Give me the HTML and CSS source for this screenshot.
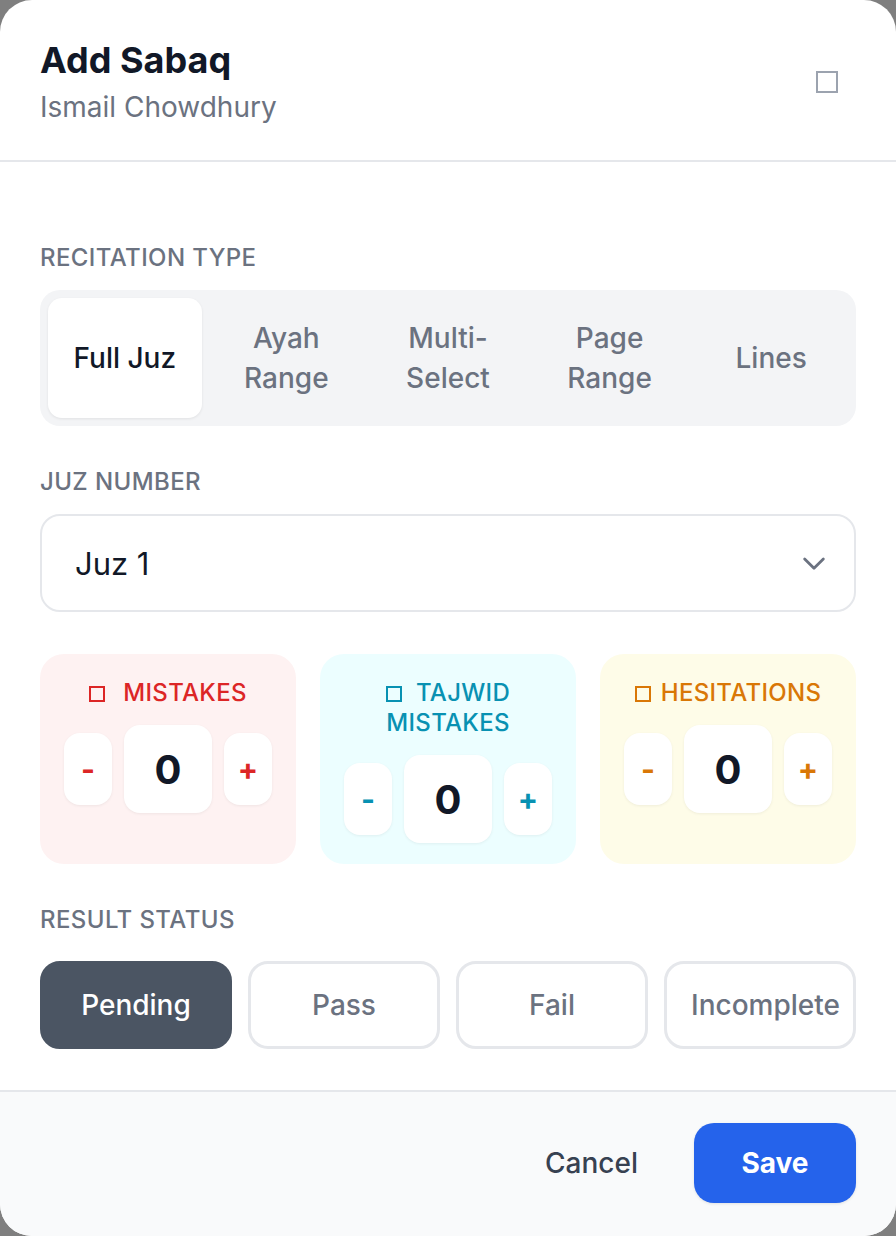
FILE: index.html
```html
<!DOCTYPE html>
<html lang="en">
<head>
    <meta charset="UTF-8">
    <meta name="viewport" content="width=device-width, initial-scale=1.0">
    <title>Add Sabaq</title>
    <link rel="stylesheet" href="styles.css">
</head>
<body>
    <div class="modal">
        <div class="modal-header">
            <div>
                <h2 class="title">Add Sabaq</h2>
                <p class="subtitle">Ismail Chowdhury</p>
            </div>
            <button class="close-btn" aria-label="Close"><span class="box-icon"></span></button>
        </div>

        <div class="modal-body">
            <label class="field-label">Recitation Type</label>
            <div class="tabs">
                <button class="tab active">Full Juz</button>
                <button class="tab">Ayah Range</button>
                <button class="tab">Multi-<br>Select</button>
                <button class="tab">Page Range</button>
                <button class="tab">Lines</button>
            </div>

            <label class="field-label">Juz Number</label>
            <div class="select">
                <span>Juz 1</span>
                <svg width="28" height="28" viewBox="0 0 24 24" fill="none" stroke="#6b7280" stroke-width="2.4" stroke-linecap="round" stroke-linejoin="round"><path d="M4 8.5l8 8 8-8"/></svg>
            </div>

            <div class="counters">
                <div class="counter red">
                    <div class="counter-label"><span class="box-icon gap-lg"></span>Mistakes</div>
                    <div class="counter-controls">
                        <button class="step">-</button>
                        <div class="value">0</div>
                        <button class="step">+</button>
                    </div>
                </div>
                <div class="counter cyan">
                    <div class="counter-label"><span class="box-icon gap-md"></span>Tajwid<br>Mistakes</div>
                    <div class="counter-controls">
                        <button class="step">-</button>
                        <div class="value">0</div>
                        <button class="step">+</button>
                    </div>
                </div>
                <div class="counter amber">
                    <div class="counter-label"><span class="box-icon gap-sm"></span>Hesitations</div>
                    <div class="counter-controls">
                        <button class="step">-</button>
                        <div class="value">0</div>
                        <button class="step">+</button>
                    </div>
                </div>
            </div>

            <label class="field-label status-label">Result Status</label>
            <div class="statuses">
                <button class="status active">Pending</button>
                <button class="status">Pass</button>
                <button class="status">Fail</button>
                <button class="status">Incomplete</button>
            </div>
        </div>

        <div class="modal-footer">
            <button class="cancel-btn">Cancel</button>
            <button class="save-btn">Save</button>
        </div>
    </div>
</body>
</html>
```

FILE: styles.css
```css
* { box-sizing: border-box; }
body { margin: 0; background: #7f7f7f; font-family: Inter, "Noto Sans", sans-serif; color: #111827; }
button { font-family: inherit; cursor: pointer; }

.modal { width: 896px; height: 1236px; background: #fff; border-radius: 32px; overflow: hidden; display: flex; flex-direction: column; }

.modal-header { display: flex; justify-content: space-between; align-items: flex-start; padding: 38px 40px 0 40px; height: 162px; border-bottom: 2px solid #e5e7eb; }
.title { margin: 0; font-size: 36px; line-height: 44px; font-weight: 700; color: #111827; }
.subtitle { margin: 6px 0 0; font-size: 28px; line-height: 38px; color: #6b7280; }
.close-btn { background: none; border: none; padding: 0; margin: 33px 18px 0 0; width: 22px; height: 22px; display: flex; align-items: center; justify-content: center; }
.close-btn .box-icon { width: 22px; height: 22px; border: 2.5px solid #9ca3af; }

.box-icon { display: inline-block; width: 16px; height: 16px; border: 2px solid currentColor; vertical-align: -1px; }
.gap-lg { margin-right: 18px; }
.gap-md { margin-right: 14px; }
.gap-sm { margin-right: 10px; }

.modal-body { flex: 1; padding: 81px 40px 0 40px; }
.field-label { display: block; font-size: 24px; line-height: 30px; font-weight: 500; color: #6b7280; text-transform: uppercase; letter-spacing: 0.4px; margin-bottom: 17px; }

.tabs { display: flex; gap: 8px; padding: 8px; background: #f3f4f6; border-radius: 20px; margin-bottom: 41px; }
.tab { flex: 1; height: 120px; border: none; background: none; border-radius: 14px; font-size: 28px; line-height: 40px; font-weight: 500; color: #6b7280; padding: 0 12px; }
.tab.active { background: #fff; color: #111827; box-shadow: 0 1px 3px rgba(0,0,0,0.08); }

.select { height: 98px; border: 2px solid #e5e7eb; border-radius: 20px; display: flex; align-items: center; justify-content: space-between; padding: 0 26px 0 33px; font-size: 31px; color: #111827; margin-bottom: 42px; }

.counters { display: grid; grid-template-columns: repeat(3, 1fr); gap: 24px; margin-bottom: 41px; }
.counter { border-radius: 24px; padding: 24px 24px 23px; height: 210px; display: flex; flex-direction: column; align-items: center; gap: 17px; }
.counter-label { font-size: 24px; line-height: 30px; font-weight: 500; text-transform: uppercase; letter-spacing: 0.3px; text-align: center; }
.counter-controls { display: flex; align-items: center; gap: 12px; }
.step { width: 48px; height: 72px; border: none; background: #fff; border-radius: 16px; font-size: 30px; font-weight: 700; box-shadow: 0 1px 3px rgba(0,0,0,0.06); padding: 0; }
.value { width: 88px; height: 88px; background: #fff; border-radius: 16px; display: flex; align-items: center; justify-content: center; font-size: 40px; font-weight: 700; color: #111827; box-shadow: 0 1px 3px rgba(0,0,0,0.06); }

.red { background: #fef2f2; color: #dc2626; }
.red .step { color: #dc2626; }
.cyan { background: #ecfeff; color: #0891b2; }
.cyan .step { color: #0891b2; }
.amber { background: #fefce8; color: #d97706; }
.amber .step { color: #d97706; }

.status-label { margin-bottom: 26px; }
.statuses { display: grid; grid-template-columns: repeat(4, minmax(0, 1fr)); gap: 16px; }
.status { height: 88px; border: 3px solid #e5e7eb; background: #fff; border-radius: 20px; font-size: 28px; font-weight: 500; color: #6b7280; padding: 0 24px; white-space: nowrap; }
.status.active { background: #4b5563; border-color: #4b5563; color: #fff; }

.modal-footer { height: 146px; border-top: 2px solid #e5e7eb; background: #f9fafb; display: flex; justify-content: flex-end; align-items: center; gap: 56px; padding: 0 40px 2px; }
.cancel-btn { background: none; border: none; font-size: 28px; font-weight: 500; color: #374151; padding: 0; }
.save-btn { width: 162px; height: 80px; border: none; border-radius: 20px; background: #2563eb; color: #fff; font-size: 28px; font-weight: 700; box-shadow: 0 1px 3px rgba(0,0,0,0.1); }
```
